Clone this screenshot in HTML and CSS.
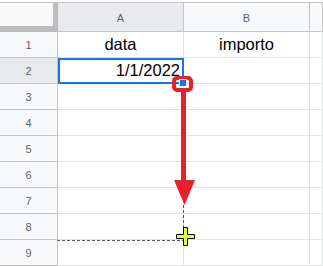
FILE: index.html
```html
<!DOCTYPE html>
<html>
<head>
    <title>Riempimento date</title>
    <link rel="stylesheet" href="styles.css">
</head>
<body>
    <div class="sheet">
        <div class="row head">
            <div class="corner"></div>
            <div class="col-head active">A</div>
            <div class="col-head">B</div>
            <div class="col-head"></div>
        </div>
        <div class="row">
            <div class="row-head">1</div>
            <div class="cell center">data</div>
            <div class="cell center">importo</div>
            <div class="cell"></div>
        </div>
        <div class="row">
            <div class="row-head active">2</div>
            <div class="cell right selected">1/1/2022<span class="handle"></span></div>
            <div class="cell"></div>
            <div class="cell"></div>
        </div>
        <div class="row"><div class="row-head">3</div><div class="cell"></div><div class="cell"></div><div class="cell"></div></div>
        <div class="row"><div class="row-head">4</div><div class="cell"></div><div class="cell"></div><div class="cell"></div></div>
        <div class="row"><div class="row-head">5</div><div class="cell"></div><div class="cell"></div><div class="cell"></div></div>
        <div class="row"><div class="row-head">6</div><div class="cell"></div><div class="cell"></div><div class="cell"></div></div>
        <div class="row"><div class="row-head">7</div><div class="cell"></div><div class="cell"></div><div class="cell"></div></div>
        <div class="row"><div class="row-head">8</div><div class="cell"></div><div class="cell"></div><div class="cell"></div></div>
        <div class="row"><div class="row-head">9</div><div class="cell"></div><div class="cell"></div><div class="cell"></div></div>
    </div>

    <!-- annotation drawn over the sheet -->
    <svg class="marks" width="323" height="266" viewBox="0 0 323 266">
        <line x1="183.5" y1="205" x2="183.5" y2="240" stroke="#5a5a5a" stroke-width="1" stroke-dasharray="3 2"/>
        <line x1="57" y1="240.5" x2="183.5" y2="240.5" stroke="#5a5a5a" stroke-width="1" stroke-dasharray="3 2"/>
        <rect x="174" y="78" width="17" height="12" rx="3" fill="none" stroke="#e8202c" stroke-width="4"/>
        <line x1="183.5" y1="92" x2="183.5" y2="182" stroke="#e8202c" stroke-width="5"/>
        <polygon points="174,180 195,180 184.5,205" fill="#e8202c"/>
        <polygon points="183.5,227.5 187.5,227.5 187.5,234.5 194.5,234.5 194.5,238.5 187.5,238.5 187.5,245.5 183.5,245.5 183.5,238.5 176.5,238.5 176.5,234.5 183.5,234.5" fill="#e4ff3a" stroke="#000" stroke-width="1"/>
    </svg>
</body>
</html>
```

FILE: styles.css
```css
body {
    margin: 0;
    background: #fff;
    font-family: "Liberation Sans", Arial, sans-serif;
    position: relative;
    overflow: hidden;
}
.sheet {
    margin-top: 2px;
    border-top: 1px solid #c4c4c4;
}
.row {
    display: grid;
    grid-template-columns: 58px 126px 126px 1fr;
    height: 26px;
}
.row.head {
    height: 29px;
}
.corner {
    box-sizing: border-box;
    background: #f8f9fa;
    border-right: 5px solid #bdbdbd;
    border-bottom: 6px solid #bdbdbd;
}
.col-head {
    box-sizing: border-box;
    background: #f8f9fa;
    border-right: 1px solid #c4c4c4;
    border-bottom: 1px solid #c4c4c4;
    color: #5f6368;
    font-size: 11px;
    display: flex;
    align-items: center;
    justify-content: center;
    padding-top: 1px;
}
.col-head.active,
.row-head.active {
    background: #e8eaed;
}
.row-head {
    box-sizing: border-box;
    background: #f8f9fa;
    border-right: 1px solid #c4c4c4;
    border-bottom: 1px solid #c4c4c4;
    color: #5f6368;
    font-size: 11px;
    display: flex;
    align-items: center;
    justify-content: center;
}
.cell {
    box-sizing: border-box;
    border-right: 1px solid #e2e3e3;
    border-bottom: 1px solid #e2e3e3;
    font-size: 16.5px;
    color: #000;
    display: flex;
    align-items: center;
    white-space: nowrap;
}
.cell.center {
    justify-content: center;
}
.cell.right {
    justify-content: flex-end;
    padding-right: 3px;
}
.cell.selected {
    position: relative;
}
.cell.selected::after {
    content: "";
    position: absolute;
    top: 0;
    left: 0;
    right: -1px;
    bottom: -1px;
    border: 2px solid #1a73e8;
}
.handle {
    position: absolute;
    right: -4px;
    bottom: -4px;
    width: 6px;
    height: 6px;
    background: #1a73e8;
    border: 1px solid #fff;
    z-index: 1;
}
.marks {
    position: absolute;
    top: 0;
    left: 0;
    pointer-events: none;
}
```
